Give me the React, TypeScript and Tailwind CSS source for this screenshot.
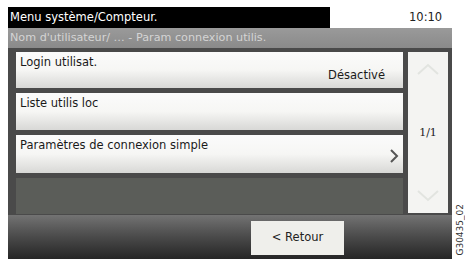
import React from "react";

// Panel screen: Menu système / Param connexion utilis.
const font = { fontFamily: '"DejaVu Sans", "Liberation Sans", sans-serif' };

function Row({
  label,
  value,
  chevron,
  h,
}: {
  label: string;
  value?: string;
  chevron?: boolean;
  h: string;
}) {
  return (
    <div
      className={`relative ${h} bg-gradient-to-b from-[#fbfbfb] via-[#f6f6f4] to-[#d8d8d6] text-[#1a1a1a] text-[11.5px] leading-none`}
    >
      <span className="absolute left-[4px] top-[5px]">{label}</span>
      {value && <span className="absolute right-[18px] bottom-[7px]">{value}</span>}
      {chevron && (
        <svg className="absolute right-[4px] top-[13px]" width="10" height="16" viewBox="0 0 10 16">
          <path d="M2 2 L8 8 L2 14" fill="none" stroke="#555" strokeWidth="2" />
        </svg>
      )}
    </div>
  );
}

export default function App() {
  return (
    <div className="w-[468px] h-[259px] bg-white flex overflow-hidden" style={font}>
      <div className="w-[8px] shrink-0" />
      <div className="w-[444px] shrink-0 flex flex-col">
        {/* ── Title bar ───────────────────────────── */}
        <div className="h-[28px] flex items-end">
          <div className="w-[322px] h-[21px] bg-black text-white text-[11.5px] pl-[2px] flex items-center">
            Menu système/Compteur.
          </div>
          <div className="flex-1 h-[21px] text-[#222] text-[11.5px] flex items-center pl-[79px]">
            10:10
          </div>
        </div>
        {/* ── Breadcrumb ─────────────────────────── */}
        <div className="h-[20px] bg-gradient-to-b from-[#9a9a9a] to-[#8a8a8a] text-[#d4d4d4] text-[11.2px] pl-[2px] flex items-center">
          Nom d'utilisateur/ … - Param connexion utilis.
        </div>
        {/* ── Main list ──────────────────────────── */}
        <div className="h-[167px] bg-[#4a4a4a] flex pl-[8px] pt-[4px] pr-[4px]">
          <div className="w-[387px] flex flex-col gap-[5px]">
            <Row h="h-[36px]" label="Login utilisat." value="Désactivé" />
            <Row h="h-[37px]" label="Liste utilis loc" />
            <Row h="h-[38px]" label="Paramètres de connexion simple" chevron />
            <div className="flex-1 mb-[1px] bg-[#5b5d59]" />
          </div>
          <div className="w-[5px]" />
          <div className="w-[40px] h-[161px] bg-[#f4f4f2] flex flex-col items-center justify-between py-[10px]">
            <svg width="24" height="14" viewBox="0 0 24 14">
              <path d="M2 12 L12 3 L22 12" fill="none" stroke="#e2e4e0" strokeWidth="2" />
            </svg>
            <span className="text-[#222] text-[11px] leading-none" style={{ fontFamily: '"DejaVu Serif", serif' }}>
              1/1
            </span>
            <svg width="24" height="14" viewBox="0 0 24 14">
              <path d="M2 2 L12 11 L22 2" fill="none" stroke="#e2e4e0" strokeWidth="2" />
            </svg>
          </div>
        </div>
        {/* ── Bottom bar ─────────────────────────── */}
        <div className="flex-1 bg-gradient-to-b from-[#737373] via-[#4a4a4a] to-[#262626] pt-[6px] pl-[243px]">
          <div className="w-[93px] h-[34px] bg-[#efefeb] text-[#222] text-[11.5px] flex justify-center pt-[8px]">
            &lt; Retour
          </div>
        </div>
      </div>
      <div className="flex-1 flex items-end justify-center pb-[3px]">
        <span
          className="text-[#333] text-[9px] leading-none"
          style={{ writingMode: "vertical-rl", transform: "rotate(180deg)" }}
        >
          G30435_02
        </span>
      </div>
    </div>
  );
}
